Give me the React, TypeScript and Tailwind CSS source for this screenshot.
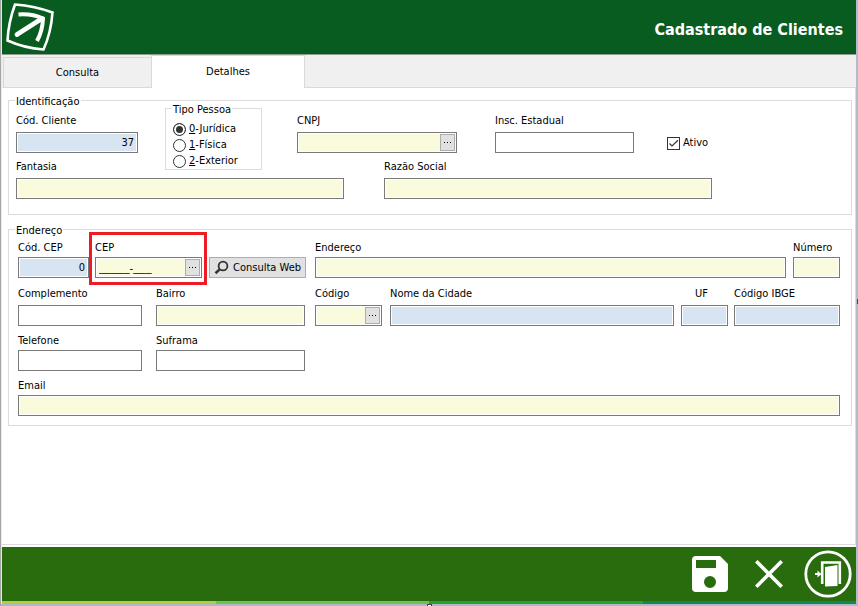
import { useState, type ReactNode } from "react"

const tones = {
    white: "bg-white",
    yellow: "bg-[#fafadc]",
    blue: "bg-[#d7e4f2]",
}

type FieldProps = {
    id: string
    label: string
    tone?: keyof typeof tones
    value?: string
    right?: boolean
    lookup?: boolean
    className?: string
    labelClass?: string
    inputClass?: string
}

function Field({ id, label, tone = "white", value = "", right, lookup, className = "", labelClass = "mb-1", inputClass = "" }: FieldProps) {
    return (
        <div className={`flex min-w-0 flex-col ${className}`}>
            <label htmlFor={id} className={`h-[14px] whitespace-nowrap ${labelClass}`}>{label}</label>
            <div className="flex h-[21px] border border-[#7a7a7a] p-px">
                <input
                    id={id}
                    type="text"
                    defaultValue={value}
                    className={`min-w-0 flex-1 px-[2px] outline-none ${tones[tone]} ${right ? "text-right" : ""} ${inputClass}`}
                />
                {lookup && (
                    <button type="button" aria-label={`Pesquisar ${label}`} className="flex w-[15px] items-center justify-center gap-[2px] border border-[#adadad] bg-[#e1e1e1]">
                        <span className="size-px bg-black" />
                        <span className="size-px bg-black" />
                        <span className="size-px bg-black" />
                    </button>
                )}
            </div>
        </div>
    )
}

function Group({ title, className = "", children }: { title: string, className?: string, children: ReactNode }) {
    return (
        <fieldset className={`min-w-0 border border-[#dcdcdc] ${className}`}>
            <legend className="h-[13px] px-px leading-[15px]">{title}</legend>
            {children}
        </fieldset>
    )
}

function Logo() {
    return (
        <svg width="50" height="50" viewBox="0 0 50 50" fill="none" stroke="white">
            <path d="M11 2.5 Q31 4 48.5 10.5 Q47 31 39.5 47.5 Q20 46 3.5 38.5 Q4.5 20 11 2.5Z" strokeWidth="2.6" />
            <path d="M13 32.5 L38 16.5" strokeWidth="4.8" strokeLinecap="round" />
            <path d="M14.5 12.5 Q28 11.5 39 16.5 Q38.5 29 33 39" strokeWidth="4" />
        </svg>
    )
}

function SaveIcon() {
    return (
        <svg width="36" height="36" viewBox="0 0 36 36">
            <path fill="white" fillRule="evenodd" d="M4 0H28L36 8V32Q36 36 32 36H4Q0 36 0 32V4Q0 0 4 0ZM4 4V12H24V4ZM18 20A6 6 0 1 0 18 32A6 6 0 1 0 18 20Z" />
        </svg>
    )
}

function CloseIcon() {
    return (
        <svg width="28" height="28" viewBox="0 0 28 28" stroke="white" strokeWidth="3.6">
            <path d="M1.3 1.3 26.7 26.7M26.7 1.3 1.3 26.7" />
        </svg>
    )
}

function ExitIcon() {
    return (
        <svg width="48" height="48" viewBox="0 0 48 48">
            <circle cx="24" cy="24" r="22.2" fill="none" stroke="white" strokeWidth="2.8" />
            <path d="M18.2 34V12.5H35.8V34" fill="none" stroke="white" strokeWidth="2.6" />
            <path d="M21 17 33.5 15V36L21 36.5Z" fill="white" />
            <path d="M11 24H15" stroke="white" strokeWidth="2" />
            <path d="M13.5 20.5 17.5 24 13.5 27.5Z" fill="white" />
        </svg>
    )
}

function App() {
    const [tipo, setTipo] = useState(0)
    const [ativo, setAtivo] = useState(true)
    const tipos = ["Jurídica", "Física", "Exterior"]

    return (
        <div className="relative flex min-h-screen flex-col border-l border-[#a5a5a5] bg-white font-['DejaVu_Sans_Condensed','DejaVu_Sans',sans-serif] text-[11px] leading-[14px] text-black">
            <div className="flex flex-1 flex-col border-r-2 border-l border-l-[#e8e8e8] border-r-[#b4bccb]">
                <header className="flex h-[55px] items-center justify-between border-b border-[#8f9a90] bg-[#095c20] pr-[13px] pl-[2px]">
                    <Logo />
                    <h1 className="mt-[6px] text-[16px] leading-[20px] font-bold text-white">Cadastrado de Clientes</h1>
                </header>

                <nav role="tablist" className="flex h-[33px] items-end bg-[#f0f0f0] pl-px">
                    <button type="button" role="tab" aria-selected="false" className="h-[31px] w-[148px] border-t border-b border-l border-[#d9d9d9]">Consulta</button>
                    <button type="button" role="tab" aria-selected="true" className="h-[33px] w-[154px] border-x border-t border-[#d9d9d9] bg-white">Detalhes</button>
                    <div className="h-px flex-1 bg-[#d9d9d9]" />
                </nav>

                <main className="flex-1 border-r border-b border-[#dcdcdc] pt-[6px] pr-[3px] pb-5 pl-[6px]">
                    <Group title="Identificação" className="px-[6px] pt-px pb-[15px]">
                        <div className="pl-px">
                            <div className="flex items-start">
                                <Field id="cliente" label="Cód. Cliente" tone="blue" value="37" right className="mr-[27px] w-[122px] pt-[6px]" />
                                <Group title="Tipo Pessoa" className="-mt-[6px] mr-[35px] w-[97px] px-[6px] pt-[6px]">
                                    {tipos.map((nome, i) => (
                                        <label key={nome} className="flex h-[16px] items-center gap-[3px] pl-px whitespace-nowrap">
                                            <input
                                                type="radio"
                                                name="tipo"
                                                checked={tipo === i}
                                                onChange={() => setTipo(i)}
                                                className="size-[13px] shrink-0 appearance-none rounded-full border border-[#333] bg-white checked:bg-[#333] checked:shadow-[inset_0_0_0_2px_white]"
                                            />
                                            <span><u>{i}</u>-{nome}</span>
                                        </label>
                                    ))}
                                </Group>
                                <Field id="cnpj" label="CNPJ" tone="yellow" lookup className="mr-[38px] w-[160px] pt-[6px]" />
                                <Field id="inscricao" label="Insc. Estadual" className="mr-[33px] w-[139px] pt-[6px]" />
                                <label className="mt-[28px] flex items-center gap-[3px]">
                                    <span className="grid size-[13px]">
                                        <input
                                            type="checkbox"
                                            checked={ativo}
                                            onChange={(e) => setAtivo(e.target.checked)}
                                            className="peer col-start-1 row-start-1 size-[13px] appearance-none border border-[#333] bg-white"
                                        />
                                        <svg viewBox="0 0 13 13" className="pointer-events-none invisible col-start-1 row-start-1 size-[13px] peer-checked:visible">
                                            <path d="M2.5 6.5 5 9 11 3.3" fill="none" stroke="#333" strokeWidth="1.2" />
                                        </svg>
                                    </span>
                                    Ativo
                                </label>
                            </div>
                            <div className="-mt-[10px] flex gap-10">
                                <Field id="fantasia" label="Fantasia" tone="yellow" className="w-[328px]" />
                                <Field id="razao" label="Razão Social" tone="yellow" className="w-[328px]" />
                            </div>
                        </div>
                    </Group>

                    <Group title="Endereço" className="mt-2 px-[6px] pt-[5px] pb-[9px]">
                        <div className="pr-[5px] pl-[3px]">
                            <div className="flex items-end">
                                <Field id="codCep" label="Cód. CEP" tone="blue" value="0" right className="mr-[6px] w-[71px]" labelClass="mb-[2px]" />
                                <div className="relative mr-[7px] w-[107px]">
                                    <Field id="cep" label="CEP" tone="yellow" value="_____-___" lookup labelClass="mb-[2px]" inputClass="font-['Liberation_Sans',sans-serif]" />
                                    <div className="pointer-events-none absolute -top-[9px] -right-[5px] -bottom-[7px] -left-[6px] border-3 border-[#ed1c24]" />
                                </div>
                                <button type="button" className="mr-[9px] flex h-[21px] w-[97px] items-center gap-1 border border-[#adadad] bg-[#e1e1e1] pl-1 whitespace-nowrap">
                                    <svg width="15" height="15" viewBox="0 0 15 15" fill="none" stroke="#333">
                                        <circle cx="9" cy="6" r="4.4" strokeWidth="1.8" />
                                        <path d="M5.6 9.4 1.5 13.2" strokeWidth="2.6" />
                                    </svg>
                                    Consulta Web
                                </button>
                                <Field id="endereco" label="Endereço" tone="yellow" className="mr-[7px] flex-1" labelClass="mb-[2px]" />
                                <Field id="numero" label="Número" tone="yellow" className="w-[47px]" labelClass="mb-[2px]" />
                            </div>

                            <div className="mt-[9px] flex">
                                <Field id="complemento" label="Complemento" className="mr-[14px] w-[124px]" />
                                <Field id="bairro" label="Bairro" tone="yellow" className="mr-[10px] w-[149px]" />
                                <Field id="codigo" label="Código" tone="yellow" lookup className="mr-2 w-[67px]" />
                                <Field id="cidade" label="Nome da Cidade" tone="blue" className="mr-[7px] flex-1" />
                                <Field id="uf" label="UF" tone="blue" className="mr-[6px] w-[47px]" labelClass="mb-1 pl-[14px]" />
                                <Field id="ibge" label="Código IBGE" tone="blue" className="w-[106px]" />
                            </div>

                            <div className="mt-[8px] flex gap-[14px]">
                                <Field id="telefone" label="Telefone" className="w-[124px]" labelClass="mb-[2px]" />
                                <Field id="suframa" label="Suframa" className="w-[149px]" labelClass="mb-[2px]" />
                            </div>

                            <Field id="email" label="Email" tone="yellow" className="mt-[8px]" labelClass="mb-[2px]" />
                        </div>
                    </Group>
                </main>

                <footer className="mt-[2px]">
                    <div className="flex h-[54px] items-center justify-end bg-[#296c0d] pr-1">
                        <button type="button" aria-label="Salvar" className="mr-[27px]"><SaveIcon /></button>
                        <button type="button" aria-label="Cancelar" className="mr-[21px]"><CloseIcon /></button>
                        <button type="button" aria-label="Sair"><ExitIcon /></button>
                    </div>
                    <div className="grid h-[3px] grid-cols-4">
                        <div className="bg-[#b5cc3c]" />
                        <div className="bg-[#74bf50]" />
                        <div className="bg-[#27a135]" />
                        <div className="bg-[#128754]" />
                    </div>
                </footer>
            </div>
            <div className="flex h-[2px] justify-center bg-[#adb8cc]">
                <div className="w-[5px] border-x border-t border-[#444] bg-white" />
            </div>
            <div className="absolute top-1/2 right-0 h-[5px] w-px -translate-y-1 bg-[#444]" />
        </div>
    )
}

export default App
